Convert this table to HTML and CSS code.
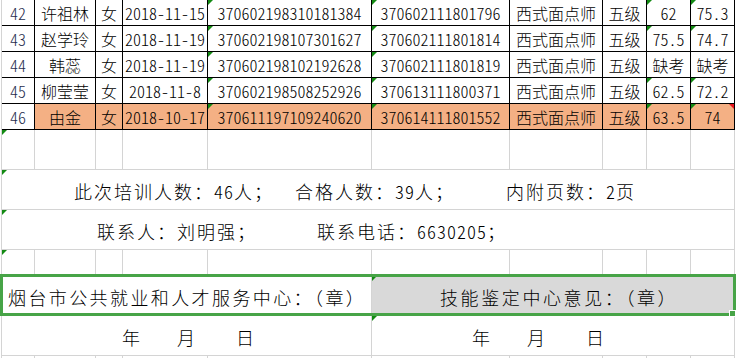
FILE: index.html
```html
<!DOCTYPE html>
<html lang="zh-CN">
<head>
<meta charset="utf-8">
<title>培训人员名单</title>
<link rel="stylesheet" href="styles.css">
</head>
<body>
<div class="sheet">
  <div class="grid">
    <div class="c blk num">42</div><div class="c blk">许祖林</div><div class="c blk">女</div><div class="c blk d">2018-11-15</div><div class="c blk d tri">370602198310181384</div><div class="c blk d tri">370602111801796</div><div class="c blk">西式面点师</div><div class="c blk">五级</div><div class="c blk d tri">62</div><div class="c blk d tri">75.3</div><div class="k"></div>

    <div class="c blk num">43</div><div class="c blk">赵学玲</div><div class="c blk">女</div><div class="c blk d">2018-11-19</div><div class="c blk d tri">370602198107301627</div><div class="c blk d tri">370602111801814</div><div class="c blk">西式面点师</div><div class="c blk">五级</div><div class="c blk d tri">75.5</div><div class="c blk d tri">74.7</div><div class="k"></div>

    <div class="c blk num">44</div><div class="c blk">韩蕊</div><div class="c blk">女</div><div class="c blk d">2018-11-19</div><div class="c blk d tri">370602198102192628</div><div class="c blk d tri">370602111801819</div><div class="c blk">西式面点师</div><div class="c blk">五级</div><div class="c blk">缺考</div><div class="c blk">缺考</div><div class="k"></div>

    <div class="c blk num">45</div><div class="c blk">柳莹莹</div><div class="c blk">女</div><div class="c blk d">2018-11-8</div><div class="c blk d tri">370602198508252926</div><div class="c blk d tri">370613111800371</div><div class="c blk">西式面点师</div><div class="c blk">五级</div><div class="c blk d tri">62.5</div><div class="c blk d tri">72.2</div><div class="k"></div>

    <div class="c blk num">46</div><div class="c blk hl">由金</div><div class="c blk hl">女</div><div class="c blk hl d">2018-10-17</div><div class="c blk hl d tri">370611197109240620</div><div class="c blk hl d tri">370614111801552</div><div class="c blk hl">西式面点师</div><div class="c blk hl">五级</div><div class="c blk hl d tri">63.5</div><div class="c blk hl d tri note">74</div><div class="k"></div>

    <div class="c tri"></div><div class="c"></div><div class="c"></div><div class="c"></div><div class="c"></div><div class="c"></div><div class="c"></div><div class="c"></div><div class="c"></div><div class="c"></div><div class="k"></div>

    <div class="c wide line tri">
      <span class="grp g1">此次培训人数：<span class="n">46</span>人；</span>
      <span class="grp g2">合格人数：<span class="n">39</span>人；</span>
      <span class="grp">内附页数：<span class="n">2</span>页</span>
    </div><div class="k"></div>

    <div class="c wide line tri">
      <span class="grp g3">联系人：刘明强；</span>
      <span class="grp">联系电话：<span class="n">6630205</span>；</span>
    </div><div class="k"></div>

    <div class="c tri"></div><div class="c"></div><div class="c"></div><div class="c"></div><div class="c"></div><div class="c"></div><div class="c"></div><div class="c"></div><div class="c"></div><div class="c"></div><div class="k"></div>

    <div class="c half sign-left">烟台市公共就业和人才服务中心：（章）</div><div class="c half sign-right tri">技能鉴定中心意见：（章）</div><div class="k"></div>

    <div class="c half date date-left"><span>年</span><span class="m">月</span><span class="dd">日</span></div><div class="c half date date-right tri"><span>年</span><span class="m">月</span><span class="dd">日</span></div><div class="k"></div>

    <div class="c"></div><div class="c"></div><div class="c"></div><div class="c"></div><div class="c"></div><div class="c"></div><div class="c"></div><div class="c"></div><div class="c"></div><div class="c"></div><div class="k"></div>
  </div>
  <div class="sel"><span class="handle"></span></div>
</div>
</body>
</html>
```

FILE: styles.css
```css
html, body {
  margin: 0;
  padding: 0;
  background: #ffffff;
  overflow: hidden;
}

body {
  font-family: "Noto Sans CJK SC", "Noto Sans", sans-serif;
  font-weight: 300;
  color: #000000;
}

.sheet {
  position: relative;
  width: 736px;
  height: 358px;
  overflow: hidden;
}

.grid {
  margin-left: 1px;
  border-left: 1px solid #d4d4d4;
  display: grid;
  grid-template-columns: 33px 61px 27px 85px 164px 138px 93px 44px 44px 44px 1px;
  grid-template-rows: 26px 26px 26px 26px 26px 40px 40px 40px 26px 40px 40px 26px;
}

.c {
  position: relative;
  box-sizing: border-box;
  border-right: 1px solid #d4d4d4;
  border-bottom: 1px solid #d4d4d4;
  display: flex;
  align-items: center;
  justify-content: center;
  font-size: 16px;
  line-height: 1;
  white-space: nowrap;
  padding-top: 1px;
}

.k {
  box-sizing: border-box;
}

.blk {
  border-right-color: #000000;
  border-bottom-color: #000000;
}

.num {
  color: #1f2d4d;
  font-feature-settings: "hwid" 1;
}

.hl {
  background: #f4b084;
}

.d {
  font-feature-settings: "hwid" 1;
  letter-spacing: 0;
}

.tri::before {
  content: "";
  position: absolute;
  left: 0;
  top: 0;
  border-top: 5px solid #138a13;
  border-right: 5px solid transparent;
}

.note::after {
  content: "";
  position: absolute;
  right: 0;
  top: 0;
  border-top: 5px solid #e8141e;
  border-left: 5px solid transparent;
}

.wide {
  grid-column: span 10;
}

.half {
  grid-column: span 5;
}

.line {
  justify-content: flex-start;
  font-size: 18px;
  letter-spacing: 2px;
  padding-top: 2px;
}

.line .grp {
  flex: none;
}

.g1 {
  padding-left: 72px;
  width: 221px;
}

.g2 {
  width: 211px;
}

.g3 {
  padding-left: 95px;
  width: 220px;
}

.n {
  font-feature-settings: "hwid" 1;
  letter-spacing: 1px;
}

.sign-left {
  justify-content: flex-start;
  padding-left: 6px;
  font-size: 18px;
  letter-spacing: 2.4px;
  padding-top: 2px;
}

.sign-right {
  justify-content: flex-start;
  padding-left: 68px;
  font-size: 18px;
  letter-spacing: 2.6px;
  background: #d9d9d9;
  padding-top: 2px;
}

.date {
  justify-content: flex-start;
  font-size: 18px;
  padding-top: 2px;
}

.date-left {
  padding-left: 120px;
}

.date-right {
  padding-left: 100px;
}

.date .m {
  margin-left: 37px;
}

.date .dd {
  margin-left: 41px;
}

.sel {
  position: absolute;
  left: 0;
  top: 274px;
  width: 736px;
  height: 42px;
  box-sizing: border-box;
  border: 3px solid #47a447;
}

.handle {
  position: absolute;
  right: -3px;
  bottom: -4px;
  width: 5px;
  height: 5px;
  background: #47a447;
  border: 1px solid #ffffff;
}
```
